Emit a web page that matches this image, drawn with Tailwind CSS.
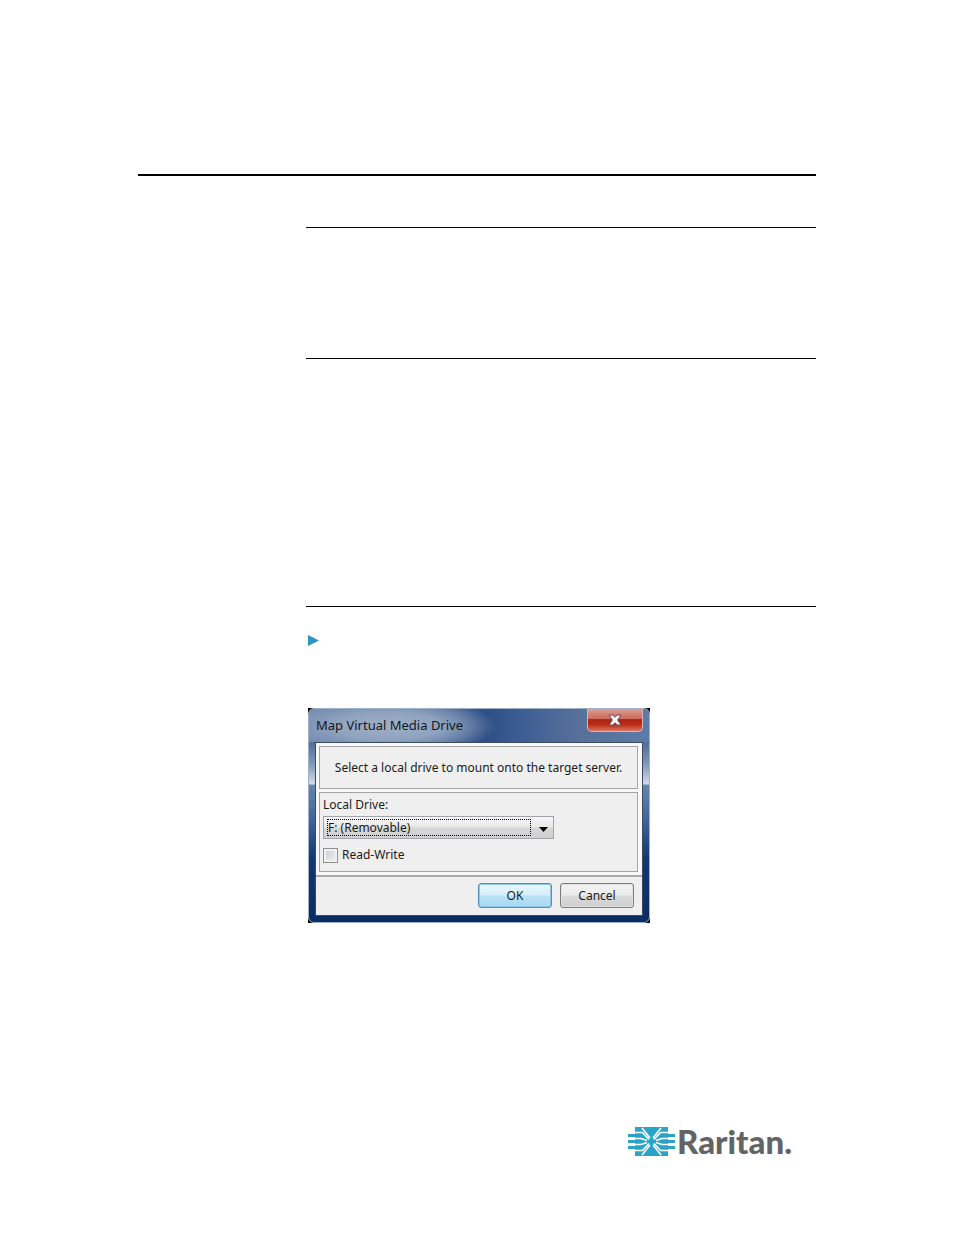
<!DOCTYPE html>
<html lang="en">

<head>
    <meta charset="UTF-8" />
    <meta name="viewport" content="width=device-width, initial-scale=1.0" />
    <title>Map Virtual Media Drive</title>
    <script src="https://cdn.jsdelivr.net/npm/@tailwindcss/browser@4"></script>
</head>

<body class="bg-white min-h-screen font-['Noto_Sans',sans-serif] text-[#1a1a1a]">
    <div class="px-[138px] pt-[174px]">
        <hr class="border-0 h-[2px] bg-black" />

        <main class="pl-[168px] pt-[51px]">
            <hr class="border-0 h-px bg-black" />
            <hr class="border-0 h-px bg-black mt-[130px]" />
            <hr class="border-0 h-px bg-black mt-[247px]" />

            <!-- Procedure marker -->
            <svg class="mt-[28px] ml-[2px] w-[11px] h-[11px]" viewBox="0 0 11 11">
                <path d="M0 0L11 5.5L0 11z" fill="#2a94c3" />
            </svg>

            <!-- Dialog window -->
            <div class="mt-[62px] ml-[2px] w-[342px] bg-black">
                <form
                    class="relative rounded-[6px] border border-[#9fb2ca] px-[6px] pb-[6px] bg-[linear-gradient(to_bottom,#6781a8_0px,#54719d_35px,#7f97b8_55px,#d3dde9_75px,#6885ae_76px,#41659a_110px,#123872_150px,#0b2c62_100%)]">
                    <div
                        class="absolute inset-x-0 top-0 h-[33px] rounded-t-[5px] bg-[radial-gradient(ellipse_110px_28px_at_78px_17px,#9fafc6_0%,#8fa2be_50%,transparent_100%),linear-gradient(to_right,#6d87ae_0%,#56739f_35%,#2d4f86_52%,#3c5d94_62%,#566f99_78%,#5c7ba6_100%)]">
                    </div>
                    <header class="relative flex items-start justify-between h-[33px] pl-[1px]">
                        <h1 class="text-[13px] leading-[33px] text-[#111820]">Map Virtual Media Drive</h1>
                        <button type="button" aria-label="Close"
                            class="flex items-center justify-center w-[56px] h-[23px] rounded-b-[5px] border border-t-0 border-[#d5b8bd] bg-[linear-gradient(to_bottom,#dc9d92_0%,#cc6a5b_44%,#ad2413_48%,#b92c16_70%,#da7460_100%)]">
                            <svg class="w-[14px] h-[12px]" viewBox="0 0 14 12">
                                <path d="M1 1H5l2 2.300L9 1h4L9.700 6l3.300 5H9L7 8.700 5 11H1l3.300-5z" fill="#f4f4f6"
                                    stroke="#6a4a5a" />
                            </svg>
                        </button>
                    </header>

                    <div class="relative border border-[#3a4a63] bg-[#efefef]">
                        <div class="p-[3px] pr-[4px] bg-[#f8f8f8] border-b-2 border-[#ababaf]">
                            <p
                                class="border border-[#a5a5a5] bg-[#efefef] h-[43px] flex items-center justify-center text-[12px]">
                                Select a local drive to mount onto the target server.</p>

                            <section class="mt-[3px] border border-[#a5a5a5] bg-[#efefef] px-[3px] pt-[3px] h-[80px]">
                                <label for="drive" class="block text-[12px] leading-[18px]">Local Drive:</label>
                                <div
                                    class="mt-[2px] flex items-center w-[231px] h-[23px] pl-[3px] border border-[#a3a3ac] bg-[linear-gradient(to_bottom,#f6f6f6_0%,#e9e9e9_45%,#d6d6d6_55%,#d0d0d0_100%)]">
                                    <select id="drive"
                                        class="appearance-none w-[204px] h-[17px] border border-dotted border-black text-[12px] leading-[15px]">
                                        <option>F: (Removable)</option>
                                    </select>
                                    <svg class="ml-[8px] mt-[3px] w-[9px] h-[5px]" viewBox="0 0 9 5">
                                        <path d="M0 0h9L4.500 5z" fill="#000" />
                                    </svg>
                                </div>
                                <div class="mt-[7px] flex items-center gap-[4px]">
                                    <input type="checkbox" id="readwrite"
                                        class="appearance-none w-[15px] h-[15px] border border-[#8e8f8f] bg-[linear-gradient(135deg,#c5cad2,#f4f4f4)] shadow-[inset_0_0_0_2px_#f2f2f2]" />
                                    <label for="readwrite" class="text-[12px] leading-[18px]">Read-Write</label>
                                </div>
                            </section>
                        </div>

                        <footer class="flex justify-end gap-[8px] pt-[6px] pb-[7px] pr-[8px]">
                            <button type="submit"
                                class="w-[74px] h-[25px] rounded-[3px] border border-[#4f8fbd] shadow-[inset_0_0_0_1px_#8cc8e8] bg-[linear-gradient(to_bottom,#e9f6fd_0%,#d6eefb_48%,#bbe2f7_52%,#a6d8f0_100%)] text-[12px]">OK</button>
                            <button type="button"
                                class="w-[74px] h-[25px] rounded-[3px] border border-[#7c7c7c] shadow-[inset_0_0_0_1px_#e2e2e2] bg-[linear-gradient(to_bottom,#f3f3f3_0%,#ebebeb_48%,#dbdbdb_52%,#cecece_100%)] text-[12px]">Cancel</button>
                        </footer>
                    </div>
                </form>
            </div>
        </main>

        <!-- Brand -->
        <footer class="mt-[198px] pr-[24px] flex justify-end items-center gap-[2px] h-[40px]">
            <svg class="w-[47px] h-[29px]" viewBox="0 0 47 29">
                <path d="M7 0H40V29H7z" fill="#2aa3c9" />
                <path d="M0 8.500h12M0 14.500h12M0 20.500h12M35 8.500h12M35 14.500h12M35 20.500h12" stroke="#2aa3c9"
                    stroke-width="3" />
                <g fill="none" stroke="#fff" stroke-width="1.600">
                    <path d="M7 5.500h7.500l6.500 7M7 11.500h6l6 2M7 17.500h6l6-2M7 23.500h7.500l6.500-7M14 1l8 10M14 28l8-10" />
                    <path d="M40 5.500h-7.500l-6.500 7M40 11.500h-6l-6 2M40 17.500h-6l-6-2M40 23.500h-7.500l-6.500-7M33 1l-8 10M33 28l-8-10" />
                </g>
            </svg>
            <span class="text-[33px] leading-[40px] font-black font-['Lato',sans-serif] text-[#636466]">Raritan.</span>
        </footer>
    </div>
</body>

</html>
